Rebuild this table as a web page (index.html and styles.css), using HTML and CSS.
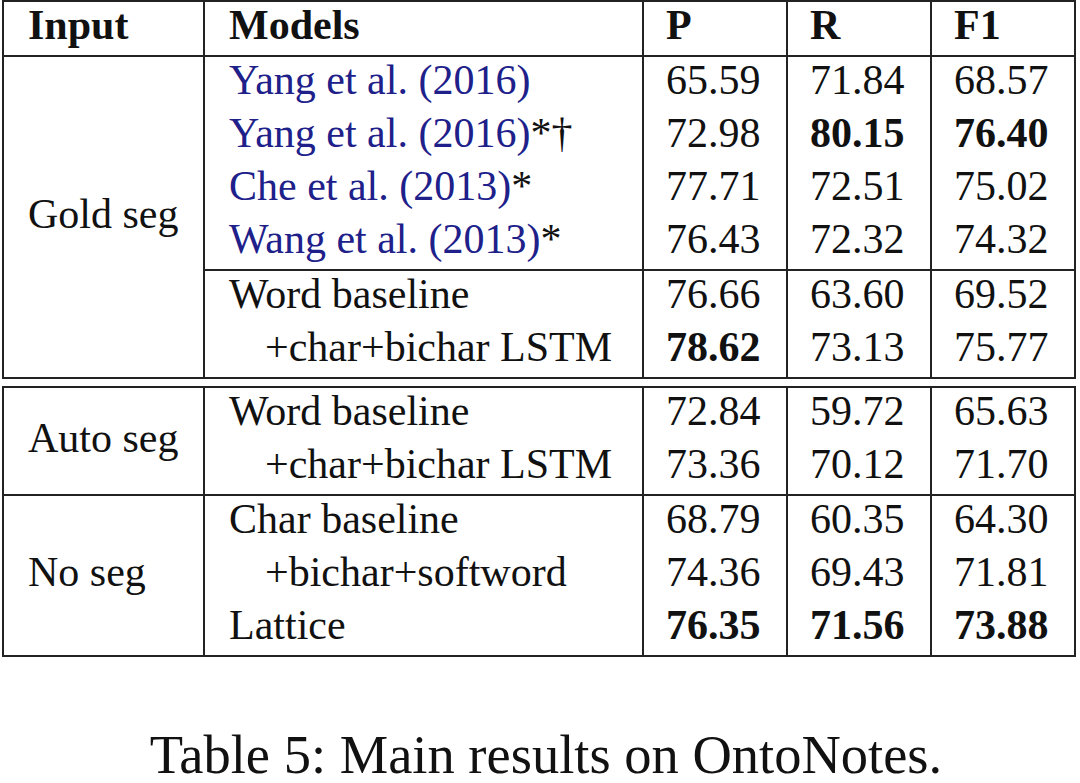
FILE: index.html
```html
<!DOCTYPE html>
<html>
<head>
    <meta charset="UTF-8">
    <title>Table 5: Main results on OntoNotes</title>
    <link rel="stylesheet" href="styles.css">
</head>
<body>
    <div class="page">
        <table class="results">
            <colgroup>
                <col class="col-input">
                <col class="col-model">
                <col class="col-num">
                <col class="col-num">
                <col class="col-num">
            </colgroup>
            <tr class="head">
                <th class="wide">Input</th>
                <th class="wide">Models</th>
                <th>P</th>
                <th>R</th>
                <th>F1</th>
            </tr>
            <tr>
                <td class="group" rowspan="6">Gold seg</td>
                <td class="model"><span class="cite">Yang et al. (2016)</span></td>
                <td>65.59</td>
                <td>71.84</td>
                <td>68.57</td>
            </tr>
            <tr>
                <td class="model"><span class="cite">Yang et al. (2016)</span>*&dagger;</td>
                <td>72.98</td>
                <td class="best">80.15</td>
                <td class="best">76.40</td>
            </tr>
            <tr>
                <td class="model"><span class="cite">Che et al. (2013)</span>*</td>
                <td>77.71</td>
                <td>72.51</td>
                <td>75.02</td>
            </tr>
            <tr class="split">
                <td class="model"><span class="cite">Wang et al. (2013)</span>*</td>
                <td>76.43</td>
                <td>72.32</td>
                <td>74.32</td>
            </tr>
            <tr>
                <td class="model">Word baseline</td>
                <td>76.66</td>
                <td>63.60</td>
                <td>69.52</td>
            </tr>
            <tr class="split">
                <td class="model indent">+char+bichar LSTM</td>
                <td class="best">78.62</td>
                <td>73.13</td>
                <td>75.77</td>
            </tr>
        </table>

        <table class="results second">
            <colgroup>
                <col class="col-input">
                <col class="col-model">
                <col class="col-num">
                <col class="col-num">
                <col class="col-num">
            </colgroup>
            <tr>
                <td class="group" rowspan="2">Auto seg</td>
                <td class="model">Word baseline</td>
                <td>72.84</td>
                <td>59.72</td>
                <td>65.63</td>
            </tr>
            <tr class="split">
                <td class="model indent">+char+bichar LSTM</td>
                <td>73.36</td>
                <td>70.12</td>
                <td>71.70</td>
            </tr>
            <tr>
                <td class="group" rowspan="3">No seg</td>
                <td class="model">Char baseline</td>
                <td>68.79</td>
                <td>60.35</td>
                <td>64.30</td>
            </tr>
            <tr>
                <td class="model indent">+bichar+softword</td>
                <td>74.36</td>
                <td>69.43</td>
                <td>71.81</td>
            </tr>
            <tr class="split">
                <td class="model">Lattice</td>
                <td class="best">76.35</td>
                <td class="best">71.56</td>
                <td class="best">73.88</td>
            </tr>
        </table>

        <p class="caption">Table 5: Main results on OntoNotes.</p>
    </div>
</body>
</html>
```

FILE: styles.css
```css
body {
    margin: 0;
    background: #fff;
    color: #111;
}
.page {
    width: 1080px;
    padding-left: 2px;
    box-sizing: border-box;
    font-family: "Liberation Serif", serif;
}
.results {
    table-layout: fixed;
    width: 1074px;
    border-collapse: separate;
    border-spacing: 0;
    border-top: 2px solid #222;
    border-left: 2px solid #222;
    font-family: "Liberation Serif", serif;
    font-size: 42px;
}
.second {
    margin-top: 7px;
}
.col-input {
    width: 201px;
}
.col-model {
    width: 439px;
}
.col-num {
    width: 144px;
}
.results th,
.results td {
    height: 53px;
    box-sizing: border-box;
    padding: 0 0 6px 22px;
    line-height: 47px;
    text-align: left;
    vertical-align: top;
    white-space: nowrap;
    border-right: 2px solid #222;
    font-weight: normal;
}
.results .wide,
.results .group,
.results .model {
    padding-left: 24px;
}
.results .indent {
    padding-left: 60px;
}
.results th {
    font-weight: bold;
    border-bottom: 2px solid #222;
}
.results .group {
    vertical-align: middle;
    border-bottom: 2px solid #222;
}
.results .split td {
    border-bottom: 2px solid #222;
}
.results .best {
    font-weight: bold;
}
.cite {
    color: #20208a;
}
.caption {
    margin: 68px 0 0;
    font-family: "Liberation Serif", serif;
    font-size: 54.5px;
    line-height: 60px;
    text-align: center;
    padding-left: 10px;
}
```
